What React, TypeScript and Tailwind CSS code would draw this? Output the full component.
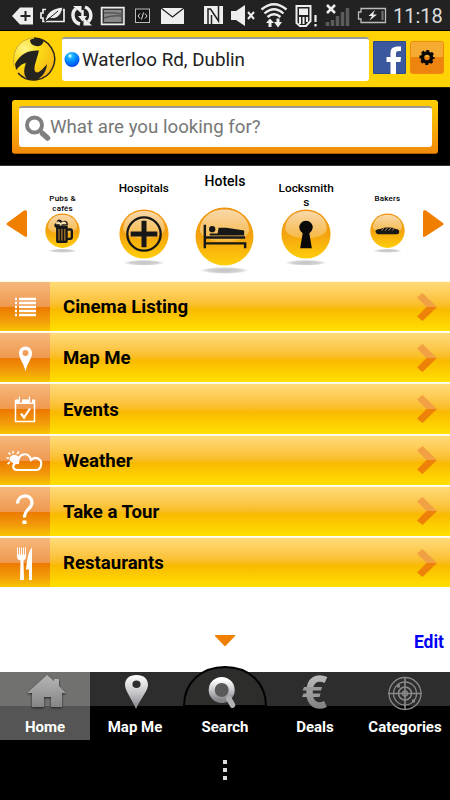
import React from "react";

const font = "font-[Roboto,'Liberation_Sans',sans-serif]";

function StatusBar() {
  return (
    <div className="h-[31px] flex items-center bg-[#222] border-b border-black shrink-0">
      <svg className="w-[370px] h-[30px] shrink-0" viewBox="0 0 370 30" fill="none">
        <path d="M12 16 20 7.5H33V24.5H20Z" fill="#eee" />
        <path d="M25.500 11V21M20.500 16H30.500" stroke="#222" strokeWidth="2" />
        <path d="M46 9.500H43V13H41V18H43V21.500H64V9.500H61" stroke="#eee" strokeWidth="1.700" />
        <path d="M45 22C46 12 53 8 63 7C61 18 54 20 49 18Z" fill="#eee" stroke="#222" />
        <path d="M46 21 58 11" stroke="#222" strokeWidth="1" />
        <g stroke="#eee" strokeWidth="3.400">
          <path d="M80 24A9 9 0 0 1 76 8.500M85 7A9 9 0 0 1 88 22" />
          <path d="M82.500 10V18" strokeWidth="2.500" />
        </g>
        <path d="M73 6H81.500V13.500ZM92 25.500H83.500V17.500ZM78 16H87L82.500 21.500Z" fill="#eee" />
        <rect x="101.500" y="7.500" width="22.500" height="17" fill="#777" stroke="#eee" strokeWidth="1.500" />
        <rect x="103.500" y="9.500" width="18.500" height="13" fill="#888" stroke="#333" />
        <path d="M104 13Q112 12 121 14M104 18Q113 15 121 16" stroke="#555" strokeWidth="1.500" />
        <rect x="135.500" y="9" width="14" height="13.500" fill="#151515" stroke="#bbb" />
        <path d="m140 13.500-2 2.500 2 2.500M145 13.500l2 2.500-2 2.500M143.500 12.500l-2 7" stroke="#ddd" />
        <path d="M161 8H184V24H161Z" fill="#eee" />
        <path d="m161 8 11.500 9L184 8" stroke="#222" strokeWidth="1.300" />
        <path d="M204 6H223V24H204Z" fill="#eee" />
        <path d="M208 24V9H210.500L218.500 21V6M211.500 24V15" stroke="#222" strokeWidth="1.500" />
        <path d="M231 11H236L245 5V26L236 20H231Z" fill="#eee" />
        <path d="m248 12 6 7m0-7-6 7" stroke="#eee" strokeWidth="2" />
        <g stroke="#eee" strokeWidth="2.300">
          <path d="M261.500 9.500Q274 -1 286.500 9.500M264.500 13.500Q274 5 283.500 13.500M267.500 17Q274 11.500 280.500 17" />
        </g>
        <path d="M266 23 270 18.500 274 23H271.500V27H268.500V23ZM274 22H276.500V18.500H279.500V22H282L278 27.500Z" fill="#eee" />
        <path d="M296.500 6H310.500V21L306 26H300L296.500 23Z" stroke="#eee" strokeWidth="2" />
        <path d="M299 8.500H308V15H299ZM299 17H301V24H299ZM302.500 17H304.500V24H302.500ZM306 17H308V22H306Z" fill="#eee" />
        <path d="M315.500 15V22M315.500 24V26.500" stroke="#eee" strokeWidth="2.200" />
        <path d="m327 5 8 8m0-8-8 8" stroke="#eee" strokeWidth="2.500" />
        <path d="M327.500 22V26M332.500 20V26M337.500 16V26M342.500 12V26M347.500 8V26" stroke="#5b5b5b" strokeWidth="3.500" />
        <path d="M370 8.500H361V12H358.500V19H361V22.500H370" stroke="#bbb" strokeWidth="1.300" />
      </svg>
      <svg className="w-[20px] h-[30px] shrink-0 overflow-visible" viewBox="0 0 20 30" fill="none">
        <path d="M0 8.500H15.500V22.500H0" stroke="#bbb" strokeWidth="1.300" />
        <path d="M12.500 11V20" stroke="#777" strokeWidth="2" />
        <path d="M5 10-1.500 16H2L-.5 20.500 7 14.500H3Z" fill="#eee" />
      </svg>
      <span className="ml-[3px] mt-[2px] text-[20px] leading-[28px] text-[#ddd] whitespace-nowrap">11:18</span>
    </div>
  );
}

function Header() {
  return (
    <header className="h-[57px] shrink-0 flex items-start bg-[#ffd206] border-b border-[#292000] pl-3 pt-[6px]">
      <svg className="w-[44px] h-[44px] shrink-0" viewBox="0 0 44 44">
        <defs>
          <radialGradient id="logo" cx=".28" cy=".25" r=".8">
            <stop stopColor="#fff48a" /><stop offset=".45" stopColor="#fadb17" /><stop offset="1" stopColor="#f8b613" />
          </radialGradient>
          <clipPath id="logoClip"><circle cx="22" cy="22" r="21" /></clipPath>
        </defs>
        <circle cx="22" cy="22" r="21" fill="url(#logo)" />
        <g clipPath="url(#logoClip)" fill="#25231f">
          <path d="M18 3Q25-1 32 3C31 8 28 10 24 9Q18 8 18 3Z" />
          <path d="M3 27C9 16 17 13 27 13.500C25 22 21 31 23 34C25 38 30 33 35 27C34 38 27 43 20 44C11 42 11 34 14 26C9 27 7 30 4 33Z" />
        </g>
        <path d="M2 29C-1 12 10 1 22 1" fill="none" stroke="#c9a93c" strokeWidth="1" />
        <path d="M22 1A21 21 0 1 1 6 36" fill="none" stroke="#29241b" strokeWidth="1.500" />
      </svg>
      <div className="ml-[6px] w-[307px] h-[44px] rounded-[3px] bg-white border-t-2 border-[#999] flex items-center">
        <svg className="ml-[2px] w-[16px] h-[16px]" viewBox="0 0 16 16">
          <defs><radialGradient id="dot" cx=".4" cy=".25" r=".8"><stop stopColor="#35cfff" /><stop offset=".5" stopColor="#008aff" /><stop offset="1" stopColor="#003be8" /></radialGradient></defs>
          <circle cx="8" cy="7.500" r="7.500" fill="url(#dot)" />
          <circle cx="6" cy="4" r="1.700" fill="#b9f5ff" />
        </svg>
        <span className="ml-[2px] text-[18.800px] text-[#222] whitespace-nowrap">Waterloo Rd, Dublin</span>
      </div>
      <svg className="ml-1 mt-1 w-[33px] h-[33px] shrink-0" viewBox="0 0 33 33">
        <rect width="33" height="33" rx="1" fill="#2d4a91" />
        <rect x="1" y="1" width="31" height="31" fill="#3b579d" />
        <path d="M17.500 33V21H13.500V16H17.500V12C17.500 7 20 5 28 5.500V10C24 9.700 23 10 23 13V16H28L27.500 21H23V33Z" fill="#fff" />
      </svg>
      <svg className="ml-1 mt-1 w-[34px] h-[33px] shrink-0" viewBox="0 0 34 33">
        <rect x=".5" y=".5" width="33" height="32" rx="2" fill="#f5ab31" stroke="#f18a0d" />
        <path d="M1 16H33V31Q33 32 32 32H2Q1 32 1 31Z" fill="#ee8410" />
        <circle cx="17" cy="16.500" r="4.500" fill="none" stroke="#080808" strokeWidth="3.500" />
        <circle cx="17" cy="16.500" r="6.300" fill="none" stroke="#080808" strokeWidth="2.600" strokeDasharray="2.8 2.148" strokeDashoffset="1.4" />
      </svg>
    </header>
  );
}

function SearchPanel() {
  return (
    <section className="h-[78px] shrink-0 bg-black border-b border-[#333] px-3 pt-3">
      <div className="w-[426px] h-[54px] rounded-[3px] bg-linear-to-b from-[#ffd000] to-[#f18a0b] border-b border-[#b86400] pl-[7px] pt-[6px]">
        <div className="w-[413px] h-[41px] rounded-[3px] bg-white border-t-2 border-[#999] flex items-center">
          <svg className="ml-[6px] w-[26px] h-[26px]" viewBox="0 0 26 26" fill="none">
            <circle cx="9.500" cy="10" r="7.500" stroke="#808080" strokeWidth="4" />
            <path d="m15 15 3 3" stroke="#808080" strokeWidth="3" />
            <path d="m17.500 18.500 5 4.500" stroke="#808080" strokeWidth="5.500" strokeLinecap="round" />
          </svg>
          <span className="-ml-px text-[18.700px] text-[#777] whitespace-nowrap">What are you looking for?</span>
        </div>
      </div>
    </section>
  );
}

function Ball({ id, className, children }: { id: string; className: string; children: React.ReactNode }) {
  return (
    <svg className={className + " shrink-0"} viewBox="0 0 60 68">
      <defs>
        <linearGradient id={id} x2="0" y2="1"><stop stopColor="#ee920c" /><stop offset=".5" stopColor="#f4a30f" /><stop offset="1" stopColor="#ffce0a" /></linearGradient>
        <linearGradient id={id + "Gloss"} x2="0" y2="1"><stop stopColor="#fff" stopOpacity=".65" /><stop offset="1" stopColor="#fff" stopOpacity=".22" /></linearGradient>
        <radialGradient id={id + "Shade"}><stop stopColor="#bbb" stopOpacity=".9" /><stop offset=".65" stopColor="#bbb" stopOpacity=".65" /><stop offset="1" stopColor="#bbb" stopOpacity="0" /></radialGradient>
      </defs>
      <ellipse cx="30" cy="64.500" rx="25" ry="3.500" fill={"url(#" + id + "Shade)"} />
      <circle cx="30" cy="30" r="29.500" fill={"url(#" + id + ")"} />
      <path d="M5 23C6 10 17 2.500 30 2.500S54 10 55 23C55 39 5 39 5 23Z" fill={"url(#" + id + "Gloss)"} />
      {children}
    </svg>
  );
}

function Carousel() {
  return (
    <section className="h-[115px] shrink-0 flex items-start">
      <svg className="w-[22px] mt-[44px] ml-[6px] h-[28px] shrink-0" viewBox="0 0 22 28"><path d="M1 13 18 .5Q21-.5 21 2V26Q21 28 18 26L1 15Q0 14 1 13Z" fill="#f07f00" /></svg>
      <div className="-ml-[6px] w-[406px] grid grid-cols-5 font-medium text-black text-center">
        <div className="flex flex-col items-center pt-[28px]">
          <div className="h-[19px] w-[38px] text-[8px] leading-[9.500px] tracking-[0.2px]">Pubs &amp; cafés</div>
          <Ball id="pub" className="w-[35px] h-[40px]">
            <path d="M20 22H39V48Q39 51 36 51H22Q19 51 19 48V25C15 24 15 17 20 17C20 9 27 10 29 14C34 11 41 14 39 21" fill="#171717" />
            <path d="M19 19C19 13 25 13 27 17C30 12 37 14 37 19H29L27 22L25 19Z" fill="#f8dfb0" />
            <path d="M38 28H44Q46 28 46 31V41Q46 44 43 44H38" fill="none" stroke="#171717" strokeWidth="4" />
            <path d="M24 27V47M29 27V47M34 27V47" stroke="#e9a12f" strokeWidth="1.500" />
          </Ball>
        </div>
        <div className="flex flex-col items-center pt-[15px]">
          <div className="h-[28px] text-[11.800px] leading-[14px]">Hospitals</div>
          <Ball id="hosp" className="w-[50px] h-[56.700px]">
            <circle cx="30" cy="30" r="20" fill="none" stroke="#171717" strokeWidth="2.800" />
            <path d="M30 14V46M14 30H46" stroke="#171717" strokeWidth="6" />
          </Ball>
        </div>
        <div className="flex flex-col items-center pt-[7px]">
          <div className="h-[34px] text-[14px] leading-[17px]">Hotels</div>
          <Ball id="hotel" className="w-[59px] h-[66.900px]">
            <path d="M10 18V42M10 31H51M10 37H51V42" fill="none" stroke="#171717" strokeWidth="2.500" />
            <circle cx="17.500" cy="22.500" r="3.200" fill="#171717" />
            <path d="M15 27H23L24 21H32L50 24V29H15Z" fill="#171717" />
          </Ball>
        </div>
        <div className="flex flex-col items-center pt-[15px]">
          <div className="h-[28px] w-[59px] text-[11.800px] leading-[14px]">Locksmith<br />s</div>
          <Ball id="lock" className="w-[50px] h-[56.700px]">
            <path d="M26 29A8 8 0 1 1 34 29L37 47H23Z" fill="#090909" />
          </Ball>
        </div>
        <div className="flex flex-col items-center pt-[28px]">
          <div className="h-[19px] text-[8px] leading-[10px] tracking-[0.2px]">Bakers</div>
          <Ball id="bake" className="w-[35px] h-[40px]">
            <path d="M10 33C8 29 12 27 18 27C24 24 38 24 44 27Q51 27 50 33Q49 37 43 36H17Q12 37 10 33Z" fill="#171717" />
            <path d="m20 30 4-5m2 5 4-5m2 5 4-5m2 5 4-5" stroke="#e8b769" strokeWidth="1.300" />
          </Ball>
        </div>
      </div>
      <svg className="-ml-[6px] mt-[44px] w-[22px] h-[28px] shrink-0" viewBox="0 0 22 28"><path d="M21 13 4 .5Q1-.5 1 2V26Q1 28 4 26L21 15Q22 14 21 13Z" fill="#f07f00" /></svg>
    </section>
  );
}

const rows: { label: string; icon: React.ReactNode }[] = [
  { label: "Cinema Listing", icon: <path d="M15 18.500h2M19 18.500h17M15 22.500h2M19 22.500h17M15 26.500h2M19 26.500h17M15 30.500h2M19 30.500h17M15 34.500h2M19 34.500h17" stroke="#fff" strokeWidth="2.500" /> },
  { label: "Map Me", icon: <path fillRule="evenodd" d="M25.500 15C21.500 15 19 18 19 22C19 27 24 32 25.500 40C27 32 32 27 32 22C32 18 29.500 15 25.500 15ZM25.500 18.500A3 3 0 1 1 25.500 24.500A3 3 0 1 1 25.500 18.500" fill="#fff" /> },
  { label: "Events", icon: <g fill="none" stroke="#fff"><path d="M15.500 18V39H34.500V18Z" strokeWidth="1.500" /><path d="M16 17.500H34V21H16Z" fill="#fff" /><path d="M20.500 14V20M30.500 14V20" stroke="#f1a067" strokeWidth="3" /><path d="M19.500 14V19.500M29.500 14V19.500" strokeWidth="1.200" /><path d="m21 31 3 4 6-9" strokeWidth="2.200" /></g> },
  { label: "Weather", icon: <g fill="none" stroke="#fff"><path d="M17 35.500C11.500 35.500 12 28 18 28.500C18 18 29 17 31 25.500C36 21 42.500 25 41 31Q40 35.500 36 35.500Z" strokeWidth="2.200" /><path d="M15 29C8 28 8 21 14 20.500Q18 20 19 23Q17 25 17 28Z" fill="#fff" stroke="none" /><path d="M13 16.500V19M8.500 18L10.500 20M6.500 23.500H9M7.500 29.500L10 27.500M19 17L17 19.500" strokeWidth="1.700" /></g> },
  { label: "Take a Tour", icon: <g><path d="M17.500 18C18 8 32 8 32 17C32 24 24.500 23 24.500 32" fill="none" stroke="#fff" strokeWidth="3.200" /><path d="M22.500 35H26.500V38.500H22.500Z" fill="#fff" /></g> },
  { label: "Restaurants", icon: <path d="M17 11H18V18H19V11H20V18H21V11H22V18H23V11H24V18H25V11H26V20Q26 23 23.500 24L24 43.500H20L20.500 24Q17 23 17 20ZM32 11V43.500H29V33H26C27 25 28 15 32 11Z" fill="#fff" /> },
];

function MenuRow({ label, icon }: { label: string; icon: React.ReactNode }) {
  return (
    <div className="h-[51.200px] shrink-0 border-t-[1.500px] border-[#fff9de] flex items-center bg-linear-to-b from-[#ffdb78] via-[#f9b900] via-55% to-[#ffe000] border-b border-b-white">
      <div className="w-[50px] self-stretch shrink-0 bg-[linear-gradient(to_bottom,#f6b77b_0%,#ef9950_50%,#ec7900_51%,#f29b0a_78%,#f8c500_100%)]">
        <svg className="w-[50px] h-[49px]" viewBox="0 1.500 50 49">{icon}</svg>
      </div>
      <span className="ml-[13px] pt-[2px] text-[18.600px] font-bold text-black leading-none whitespace-nowrap flex-1">{label}</span>
      <svg className="w-[20px] h-[30px] mr-[13px]" viewBox="0 0 20 30">
        <path d="M5.500 1 20 15H9.500L0 5.500Z" fill="#f2a044" />
        <path d="M20 15H9.500L0 24.500 5.500 29Z" fill="#ee8208" />
      </svg>
    </div>
  );
}

function Tab({ label, active, children }: { label: string; active?: boolean; children: React.ReactNode }) {
  return (
    <div className={"w-[90px] h-[68px] flex flex-col items-center " + (active ? "bg-[linear-gradient(to_bottom,#71726f_0_50%,#555_50%)]" : "bg-[linear-gradient(to_bottom,#2c2d2c_0_50%,#000_50%)]")}>
      <div className="h-[44px] shrink-0">{children}</div>
      <span className="text-[15px] leading-[22px] font-bold text-white whitespace-nowrap">{label}</span>
    </div>
  );
}

function TabBar() {
  return (
    <nav className="h-[68px] shrink-0 flex">
      <svg className="w-0 h-0 absolute"><defs>
        <linearGradient id="silver" x2="0" y2="1"><stop stopColor="#fff" /><stop offset=".5" stopColor="#c8c8cc" /><stop offset="1" stopColor="#858589" /></linearGradient>
        <linearGradient id="grey" x2="0" y2="1"><stop stopColor="#b6b6b6" /><stop offset="1" stopColor="#858585" /></linearGradient>
      </defs></svg>
      <Tab label="Home" active>
        <svg className="w-[90px] h-[44px] drop-shadow-[0_1px_1px_#222]" viewBox="0 0 90 44"><path d="M27 21 47 3 54 9V7H59V14L66 21H62V35H51V25H44V35H32V21Z" fill="url(#grey)" /></svg>
      </Tab>
      <Tab label="Map Me">
        <svg className="w-[90px] h-[44px]" viewBox="0 0 90 44"><path fillRule="evenodd" d="M46.500 3C39 3 35 7 35 13C35 19 43 29 46 37C49 29 58 19 58 13C58 7 54 3 46.500 3ZM46.500 8.500A4 3.700 0 1 1 46.500 16A4 3.700 0 1 1 46.500 8.500" fill="url(#silver)" /></svg>
      </Tab>
      <div className="relative">
        <Tab label="Search">
          <svg className="absolute left-0 -top-[6px] w-[90px] h-[44px]" viewBox="0 0 90 44">
            <path d="M4 40C4 16 22 1 45 1S86 16 86 40Z" fill="#2d2d2c" stroke="#000" strokeWidth="2" />
            <circle cx="41.700" cy="24" r="10" fill="#5a5a5a" stroke="url(#silver)" strokeWidth="6" />
            <path d="m49 33 3.500 6" stroke="#b2b2b6" strokeWidth="5.500" strokeLinecap="round" />
          </svg>
        </Tab>
      </div>
      <Tab label="Deals">
        <svg className="w-[90px] h-[44px]" viewBox="0 0 90 44" fill="none" stroke="url(#grey)">
          <path d="M56 8C47 4 39.500 8 39.500 20S47 36 55.500 32" strokeWidth="6.500" />
          <path d="M34 15H52L51 18.500H32.500ZM33.500 21.500H50.500L49.500 25H32Z" fill="#999" stroke="none" />
        </svg>
      </Tab>
      <Tab label="Categories">
        <svg className="w-[90px] h-[44px]" viewBox="0 0 90 44" fill="none" stroke="#898989" strokeWidth="1.300"><circle cx="45" cy="21.500" r="16" /><circle cx="45" cy="21.500" r="11.500" /><circle cx="45" cy="21.500" r="6.500" strokeWidth="1.600" /><circle cx="45" cy="21.500" r="2.500" /><path d="M45 5V38M28 21.500H62" strokeWidth="1.600" /><path d="M37 14h3M52 29h3" strokeWidth="3" /></svg>
      </Tab>
    </nav>
  );
}

export default function App() {
  return (
    <main className={"w-[450px] h-[800px] overflow-hidden flex flex-col bg-white " + font}>
      <StatusBar />
      <Header />
      <SearchPanel />
      <Carousel />
      <section className="h-[307px] shrink-0 flex flex-col">{rows.map((row) => <MenuRow key={row.label} {...row} />)}</section>
      <div className="h-[84px] shrink-0 grid grid-cols-3 items-start">
        <span />
        <svg className="justify-self-center mt-[46px] w-[22px] h-[13px]" viewBox="0 0 22 13"><path d="M1 1H21Q22 1 21 2L12 11.500Q11 12.500 10 11.500L1 2Z" fill="#f07f00" /></svg>
        <span className="justify-self-end mr-[6px] mt-[42px] text-[17.500px] leading-[24px] font-bold text-[#0000f4]">Edit</span>
      </div>
      <TabBar />
      <footer className="h-[60px] shrink-0 bg-black flex flex-col items-center pt-[20px] gap-[4px]">
        <i className="w-[4px] h-[4px] bg-[#ddd]" /><i className="w-[4px] h-[4px] bg-[#ddd]" /><i className="w-[4px] h-[4px] bg-[#ddd]" />
      </footer>
    </main>
  );
}
